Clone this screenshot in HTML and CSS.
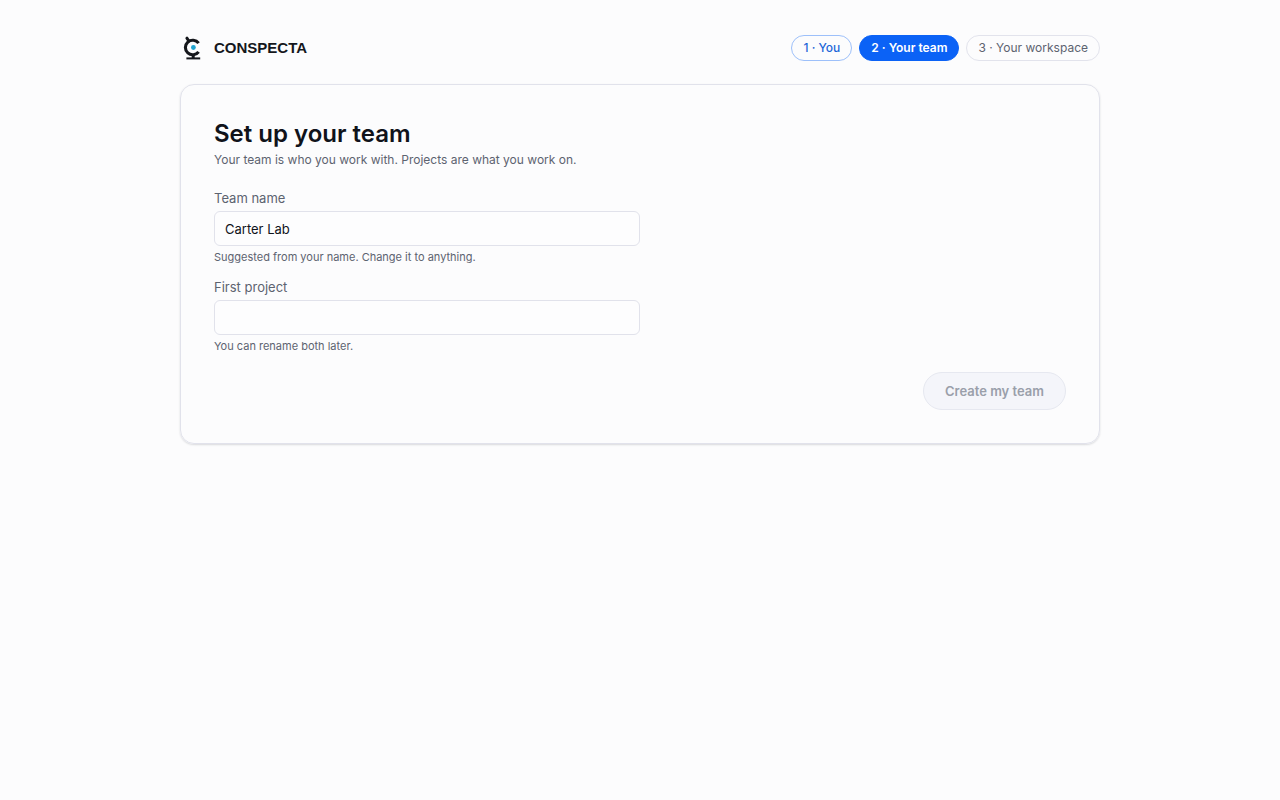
FILE: index.html
```html
<!DOCTYPE html>
<html lang="en">
<head>
  <meta charset="UTF-8" />
  <meta name="viewport" content="width=device-width, initial-scale=1.0"/>
  <title>Set up your team - Conspecta</title>
  <link rel="stylesheet" href="styles.css">
</head>
<body>
  <div class="container">
    <header class="topbar">
      <a href="#" class="brand">
        <svg class="logo" viewBox="0 0 24 24" fill="none" stroke="#15171c" aria-hidden="true">
          <path d="M18.6 7.2A7.3 7.3 0 1 0 18.6 15.8" stroke-width="3.1"/>
          <path d="M6.9 2.2L8.8 5" stroke-width="3" stroke-linecap="round"/>
          <path d="M13.2 18v4" stroke-width="3"/>
          <path d="M6.4 22.4h13.8" stroke-width="2"/>
          <circle cx="13.4" cy="11.5" r="2.4" fill="#1fa3cf" stroke="none"/>
        </svg>
        <span>CONSPECTA</span>
      </a>
      <ol class="steps">
        <li class="step done">1 · You</li>
        <li class="step current" aria-current="step">2 · Your team</li>
        <li class="step">3 · Your workspace</li>
      </ol>
    </header>

    <main class="card">
      <h1>Set up your team</h1>
      <p class="intro">Your team is who you work with. Projects are what you work on.</p>

      <form id="teamForm">
        <div class="field">
          <label for="team_name">Team name</label>
          <input type="text" id="team_name" name="team_name" value="Carter Lab" aria-describedby="team_hint" required />
          <p class="hint" id="team_hint">Suggested from your name. Change it to anything.</p>
        </div>

        <div class="field">
          <label for="first_project">First project</label>
          <input type="text" id="first_project" name="first_project" aria-describedby="project_hint" required />
          <p class="hint" id="project_hint">You can rename both later.</p>
        </div>

        <div class="actions">
          <button type="submit" disabled>Create my team</button>
        </div>
      </form>
    </main>
  </div>
</body>
</html>
```
FILE: styles.css
```css
* {
  box-sizing: border-box;
}

body {
  margin: 0;
  font-family: Inter, "Liberation Sans", sans-serif;
  font-size: 13px;
  line-height: 20px;
  color: #10131a;
  background: #fcfcfd;
}

.container {
  max-width: 968px;
  margin: 0 auto;
  padding: 35px 24px;
}

.topbar {
  display: flex;
  justify-content: space-between;
  align-items: center;
  margin-bottom: 23px;
}

.brand {
  display: flex;
  align-items: center;
  gap: 10px;
  color: #15171c;
  font-family: "Liberation Sans", Arial, sans-serif;
  font-size: 15px;
  font-weight: bold;
  text-decoration: none;
}

.logo {
  width: 24px;
  height: 24px;
}

.steps {
  display: flex;
  gap: 7px;
  margin: 0;
  padding: 0;
  list-style: none;
}

.step {
  padding: 3px 11px;
  border: 1px solid #e2e3ec;
  border-radius: 13px;
  font-size: 12px;
  line-height: 18px;
  color: #5d6370;
}

.step.done {
  border-color: #9dc0fa;
  color: #1c66d8;
  font-weight: 500;
}

.step.current {
  border-color: #0b62f6;
  background: #0b62f6;
  color: white;
  font-weight: 600;
}

.card {
  padding: 33px;
  border: 1px solid #e1e2eb;
  border-radius: 14px;
  box-shadow: 0 1px 2px rgba(20, 24, 40, 0.15);
}

h1 {
  margin: 0;
  font-size: 24px;
  line-height: 32px;
  font-weight: 600;
}

.intro {
  margin: 0 0 18px;
  font-size: 12px;
  color: #5d6370;
}

.field {
  margin-bottom: 12px;
}

label {
  display: block;
  margin-bottom: 3px;
  color: #5d6370;
}

input {
  display: block;
  width: 50%;
  height: 35px;
  padding: 0 10px;
  border: 1px solid #e1e2eb;
  border-radius: 6px;
  background: #fdfdfe;
  color: #10131a;
  font: inherit;
}

.hint {
  margin: 3px 0 0;
  font-size: 11px;
  line-height: 16px;
  color: #5d6370;
}

.actions {
  display: flex;
  justify-content: flex-end;
  padding-top: 6px;
}

button {
  padding: 8px 21px;
  border: 1px solid #e6e8f0;
  border-radius: 19px;
  background: #f4f5fa;
  color: #9a9faa;
  font: inherit;
  font-weight: 600;
}
```
